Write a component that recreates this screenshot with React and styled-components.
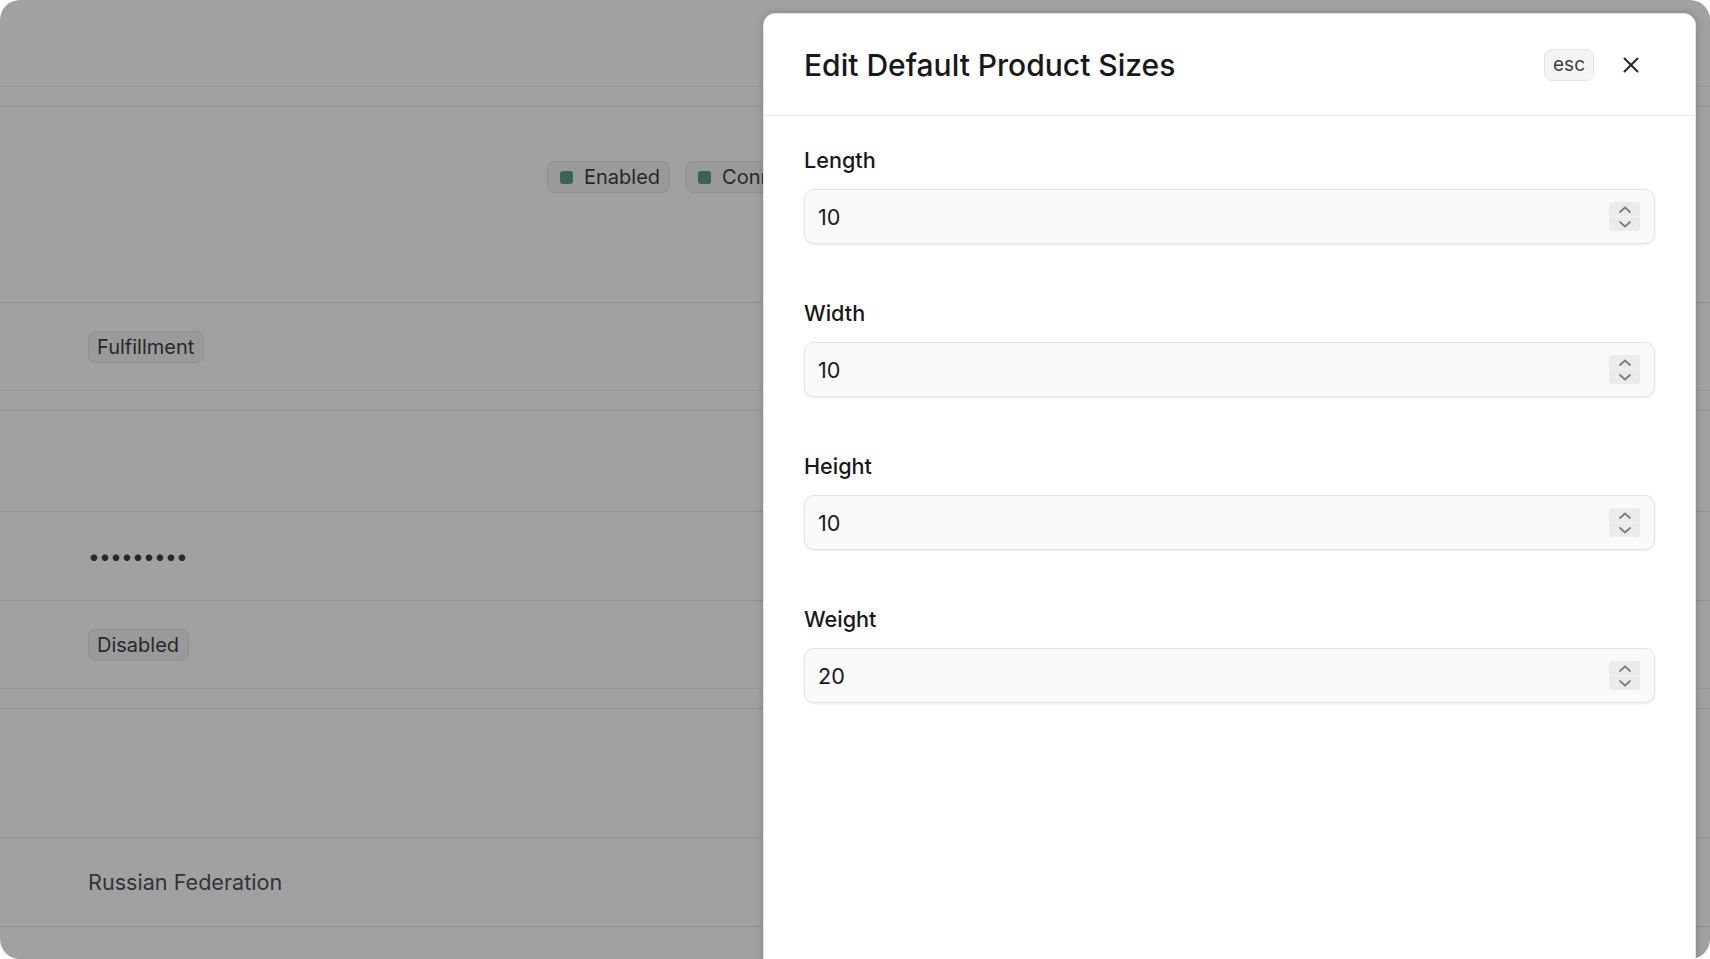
import React from 'react';
import styled, { createGlobalStyle } from 'styled-components';

const GlobalStyle = createGlobalStyle`
  html, body {
    margin: 0;
    padding: 0;
    background: #ffffff;
  }
  body {
    font-family: Inter, "Noto Sans", sans-serif;
    -webkit-font-smoothing: antialiased;
  }
  * {
    box-sizing: border-box;
  }
`;

const Frame = styled.div`
  position: relative;
  height: 100vh;
  border-radius: 20px;
  overflow: hidden;
  background: #ffffff;
  color: #27272a;
`;

/* page behind the overlay */

const Page = styled.div`
  display: flex;
  flex-direction: column;
`;

const TopBar = styled.div`
  height: 87px;
  border-bottom: 1px solid #ededed;
`;

const Section = styled.div`
  margin-top: 19px;
  border-top: 1px solid #e6e6e6;
  display: flex;
  flex-direction: column;
`;

const Row = styled.div`
  height: ${(p) => p.$height}px;
  border-bottom: 1px solid ${(p) => (p.$last ? '#ededed' : '#e6e6e6')};
  display: flex;
  align-items: ${(p) => (p.$top ? 'flex-start' : 'center')};
  gap: 15px;
  padding: ${(p) => (p.$top ? '54px' : '0')} 0 0 ${(p) => p.$indent || 88}px;
`;

const Badge = styled.span`
  display: inline-flex;
  align-items: center;
  gap: 11px;
  height: 32px;
  padding: 0 9px 0 ${(p) => (p.$dot ? 12 : 8)}px;
  border: 1px solid #e4e4e7;
  border-radius: 8px;
  background: #f4f4f5;
  font-size: 20px;
  color: #3f3f46;
  white-space: nowrap;
`;

const Dot = styled.span`
  width: 13px;
  height: 13px;
  border-radius: 3px;
  background: #5f9a88;
`;

const Secret = styled.span`
  font-size: 21px;
  letter-spacing: -0.8px;
  color: #3f3f46;
`;

const PlainText = styled.span`
  font-size: 21.6px;
  color: #52525b;
`;

const Overlay = styled.div`
  position: absolute;
  inset: 0;
  background: rgba(0, 0, 0, 0.37);
`;

/* drawer */

const Drawer = styled.aside`
  position: absolute;
  top: 13px;
  left: 763px;
  right: 14px;
  bottom: -20px;
  background: #ffffff;
  border: 1px solid #e6e6e6;
  border-radius: 12px;
  box-shadow: 0 0 8px rgba(0, 0, 0, 0.18);
  display: flex;
  flex-direction: column;
`;

const Header = styled.header`
  height: 102px;
  flex-shrink: 0;
  display: flex;
  align-items: center;
  justify-content: space-between;
  padding: 0 46px 0 40px;
  border-bottom: 1px solid #e8e8e8;
`;

const Title = styled.h2`
  margin: 0;
  font-size: 30px;
  font-weight: 450;
  color: #18181b;
`;

const HeaderActions = styled.div`
  display: flex;
  align-items: center;
  gap: 19px;
`;

const Kbd = styled.kbd`
  display: inline-flex;
  align-items: center;
  justify-content: center;
  height: 32px;
  padding: 0 8px;
  border: 1px solid #e4e4e7;
  border-radius: 8px;
  background: #f4f4f5;
  font-family: Inter, sans-serif;
  font-size: 19px;
  color: #3f3f46;
`;

const CloseButton = styled.button`
  width: 36px;
  height: 36px;
  display: flex;
  align-items: center;
  justify-content: center;
  border: none;
  background: transparent;
  padding: 0;
  color: #27272a;
  cursor: pointer;
`;

const Body = styled.div`
  display: flex;
  flex-direction: column;
  gap: 55px;
  padding: 30px 40px 0 40px;
`;

const Field = styled.div`
  display: flex;
  flex-direction: column;
  gap: 15px;
`;

const Label = styled.label`
  font-size: 21.6px;
  line-height: 28px;
  font-weight: 500;
  color: #18181b;
`;

const InputBox = styled.div`
  height: 55px;
  display: flex;
  align-items: center;
  justify-content: space-between;
  padding: 0 14px 0 13px;
  border: 1px solid #e4e4e7;
  border-radius: 10px;
  background: #fafafa;
  box-shadow: 0 1px 2px rgba(0, 0, 0, 0.08);
`;

const Value = styled.span`
  font-size: 21.6px;
  color: #18181b;
`;

const Stepper = styled.div`
  width: 31px;
  height: 29px;
  display: flex;
  flex-direction: column;
  background: #ebebeb;
  border-radius: 3px;
`;

const StepHalf = styled.div`
  flex: 1;
  display: flex;
  align-items: center;
  justify-content: center;
  color: #7d7d7d;
  border-top: ${(p) => (p.$lower ? '1px dotted #fafafa' : 'none')};
`;

const Chevron = ({ up }) => (
  <svg width="14" height="9" viewBox="0 0 14 9" fill="none">
    <path
      d={up ? 'M2 7 L7 2.5 L12 7' : 'M2 2 L7 6.5 L12 2'}
      stroke="currentColor"
      strokeWidth="1.8"
      strokeLinecap="round"
      strokeLinejoin="round"
    />
  </svg>
);

const CloseIcon = () => (
  <svg width="16" height="16" viewBox="0 0 16 16" fill="none">
    <path d="M1.5 1.5 L14.5 14.5 M14.5 1.5 L1.5 14.5" stroke="currentColor" strokeWidth="2" strokeLinecap="round" />
  </svg>
);

const fields = [
  { label: 'Length', value: '10' },
  { label: 'Width', value: '10' },
  { label: 'Height', value: '10' },
  { label: 'Weight', value: '20' },
];

const NumberField = ({ label, value }) => (
  <Field>
    <Label>{label}</Label>
    <InputBox>
      <Value>{value}</Value>
      <Stepper>
        <StepHalf>
          <Chevron up />
        </StepHalf>
        <StepHalf $lower>
          <Chevron />
        </StepHalf>
      </Stepper>
    </InputBox>
  </Field>
);

const App = () => (
  <Frame>
    <GlobalStyle />
    <Page>
      <TopBar />
      <Section>
        <Row $height={196} $top $indent={547}>
          <Badge $dot>
            <Dot />
            Enabled
          </Badge>
          <Badge $dot>
            <Dot />
            Connected
          </Badge>
        </Row>
        <Row $height={88} $last>
          <Badge>Fulfillment</Badge>
        </Row>
      </Section>
      <Section>
        <Row $height={101} />
        <Row $height={89}>
          <Secret>•••••••••</Secret>
        </Row>
        <Row $height={88} $last>
          <Badge>Disabled</Badge>
        </Row>
      </Section>
      <Section>
        <Row $height={129} />
        <Row $height={89}>
          <PlainText>Russian Federation</PlainText>
        </Row>
        <Row $height={60} />
      </Section>
    </Page>
    <Overlay />
    <Drawer>
      <Header>
        <Title>Edit Default Product Sizes</Title>
        <HeaderActions>
          <Kbd>esc</Kbd>
          <CloseButton aria-label="Close">
            <CloseIcon />
          </CloseButton>
        </HeaderActions>
      </Header>
      <Body>
        {fields.map((f) => (
          <NumberField key={f.label} label={f.label} value={f.value} />
        ))}
      </Body>
    </Drawer>
  </Frame>
);

export default App;
